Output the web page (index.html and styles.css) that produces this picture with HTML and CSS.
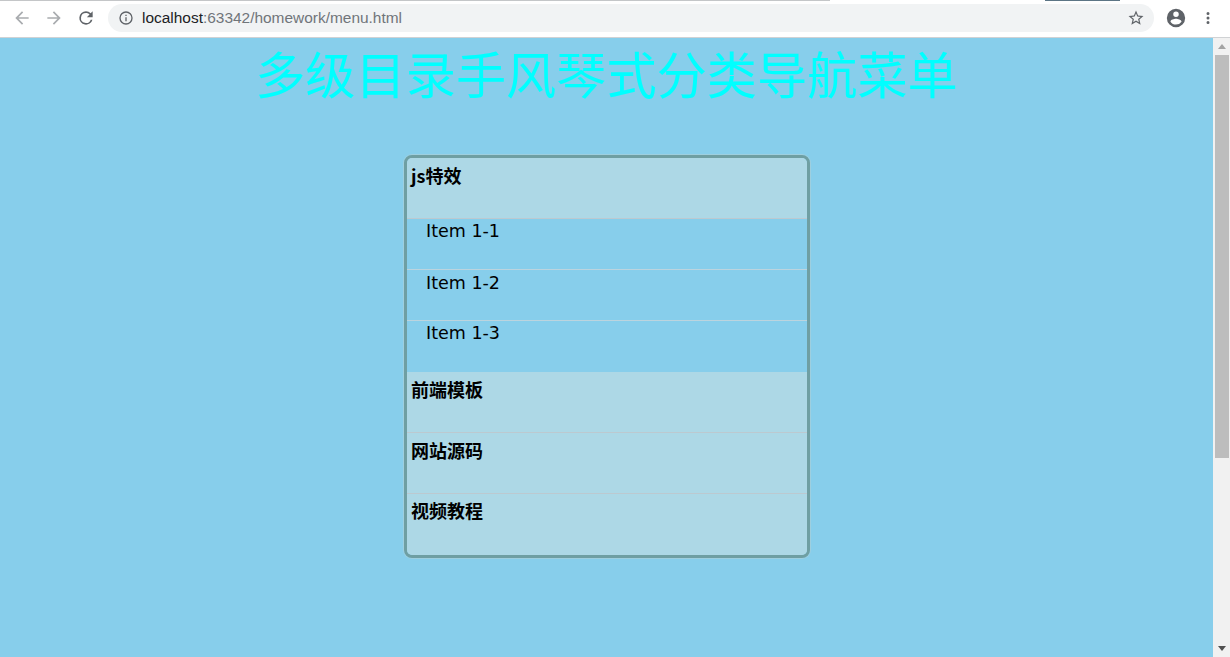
FILE: index.html
```html
<!DOCTYPE html>
<html lang="zh">
<head>
<meta charset="utf-8">
<title>menu</title>
<link rel="stylesheet" href="styles.css">
</head>
<body>
<div class="tabstrip"><span class="strip-a"></span><span class="strip-b"></span><span class="strip-c"></span></div>
<header class="toolbar">
  <svg class="nav-icon" viewBox="0 0 24 24"><path class="back" d="M20 11H7.8l5.6-5.6L12 4l-8 8 8 8 1.4-1.4L7.8 13H20z"/></svg>
  <svg class="nav-icon" viewBox="0 0 24 24"><path class="back" d="M4 11h12.2l-5.6-5.6L12 4l8 8-8 8-1.4-1.4 5.6-5.6H4z"/></svg>
  <svg class="nav-icon" viewBox="0 0 24 24"><path class="live" d="M17.65 6.35A7.96 7.96 0 0 0 12 4a8 8 0 1 0 7.74 10h-2.08A6 6 0 1 1 12 6c1.66 0 3.14.69 4.22 1.78L13 11h7V4z"/></svg>
  <div class="omnibox">
    <svg class="info" viewBox="0 0 24 24"><path class="live" d="M11 7h2v2h-2zm0 4h2v6h-2zm1-9a10 10 0 1 0 0 20 10 10 0 0 0 0-20zm0 18a8 8 0 1 1 0-16 8 8 0 0 1 0 16z"/></svg>
    <span class="url"><span class="host">localhost</span>:63342/homework/menu.html</span>
    <svg class="star" viewBox="0 0 24 24"><path class="live" d="M22 9.24l-7.19-.62L12 2 9.19 8.63 2 9.24l5.46 4.73L5.82 21 12 17.27 18.18 21l-1.63-7.03L22 9.24zM12 15.4l-3.76 2.27 1-4.28-3.32-2.88 4.38-.38L12 6.1l1.71 4.04 4.38.38-3.32 2.88 1 4.28L12 15.4z"/></svg>
  </div>
  <svg class="avatar" viewBox="0 0 24 24"><path class="live" d="M12 2a10 10 0 1 0 0 20 10 10 0 0 0 0-20zm0 3a3 3 0 1 1 0 6 3 3 0 0 1 0-6zm0 14.2a7.2 7.2 0 0 1-6-3.22c.03-2 4-3.08 6-3.08s5.97 1.09 6 3.08a7.2 7.2 0 0 1-6 3.22z"/></svg>
  <svg class="dots" viewBox="0 0 24 24"><path class="live" d="M12 8a2 2 0 1 0 0-4 2 2 0 0 0 0 4zm0 2a2 2 0 1 0 0 4 2 2 0 0 0 0-4zm0 6a2 2 0 1 0 0 4 2 2 0 0 0 0-4z"/></svg>
</header>
<div class="viewport">
  <main class="page">
    <h1 class="title">多级目录手风琴式分类导航菜单</h1>
    <nav class="menu">
      <div class="head head-first">js特效</div>
      <div class="item">Item 1-1</div>
      <div class="item item-mid">Item 1-2</div>
      <div class="item item-last">Item 1-3</div>
      <div class="head">前端模板</div>
      <div class="head">网站源码</div>
      <div class="head head-last">视频教程</div>
    </nav>
  </main>
  <aside class="scrollbar">
    <span class="arrow-up"></span>
    <span class="thumb"></span>
    <span class="arrow-down"></span>
  </aside>
</div>
</body>
</html>
```
FILE: styles.css
```css
* { box-sizing: border-box; }
html, body { margin: 0; height: 657px; overflow: hidden; }
body {
  background: #87ceeb;
  font-family: "Noto Sans", "Noto Sans CJK SC", sans-serif;
  display: flex;
  flex-direction: column;
}
.tabstrip { height: 1px; display: flex; background: #fff; flex: none; }
.strip-a { width: 830px; background: #c4c6c8; }
.strip-b { width: 215px; background: #fff; }
.strip-c { width: 75px; background: #5c7585; }
.toolbar {
  height: 37px;
  flex: none;
  background: #fff;
  border-bottom: 1px solid #d0d2d4;
  display: flex;
  align-items: center;
  padding: 0 12px 2px 12px;
}
.nav-icon { width: 20px; height: 20px; margin-right: 12px; flex: none; }
.back { fill: #a9acaf; }
.live { fill: #5f6368; }
.omnibox {
  width: 1046px;
  height: 28px;
  background: #f1f3f4;
  border-radius: 14px;
  display: flex;
  align-items: center;
  padding: 0 9px 0 10px;
  flex: none;
}
.info { width: 16px; height: 16px; margin-right: 8px; flex: none; }
.url {
  font-family: "Liberation Sans", sans-serif;
  font-size: 15.45px;
  color: #70757a;
  flex: 1;
}
.host { color: #202124; }
.star { width: 18px; height: 18px; flex: none; }
.avatar { width: 22px; height: 22px; margin-left: 11px; flex: none; }
.dots { width: 18px; height: 18px; margin-left: 12px; flex: none; }
.viewport { flex: 1; display: flex; min-height: 0; }
.page { flex: 1; min-width: 0; }
.title {
  margin: 1px 0 0;
  height: 116px;
  text-align: center;
  font-family: "Noto Sans CJK SC", sans-serif;
  font-size: 50.2px;
  line-height: 66px;
  font-weight: 400;
  color: #00ffff;
}
.menu {
  width: 406px;
  height: 403px;
  margin-left: 404px;
  border: 3px solid #6f9fa3;
  border-radius: 8px;
  box-shadow: 0 0 0 1px #9ecfdf;
  overflow: hidden;
  display: flex;
  flex-direction: column;
}
.head {
  height: 61px;
  flex: none;
  background: #add8e6;
  border-bottom: 1px solid #bcc9d0;
  padding: 5px 0 0 4px;
  font-family: "Noto Sans CJK SC", sans-serif;
  font-size: 18px;
  font-weight: 700;
  line-height: 24px;
  color: #000;
}
.head-last { border-bottom: 0; padding-top: 4px; }
.item {
  height: 51px;
  flex: none;
  border-bottom: 1px solid #bcd4de;
  padding: 0 0 0 19px;
  font-family: "DejaVu Sans", sans-serif;
  font-size: 17.5px;
  line-height: 24px;
  color: #000;
}
.item-mid { padding-top: 1px; }
.item-last { border-bottom: 0; }
.scrollbar {
  width: 17px;
  flex: none;
  background: #f1f1f1;
  display: flex;
  flex-direction: column;
  align-items: center;
  padding: 6px 0;
}
.thumb { width: 14px; height: 403px; background: #bdbdbd; margin-top: 6px; }
.arrow-up {
  width: 0; height: 0;
  border-left: 4px solid transparent;
  border-right: 4px solid transparent;
  border-bottom: 5px solid #a3a3a3;
}
.arrow-down {
  width: 0; height: 0;
  margin-top: auto;
  border-left: 4px solid transparent;
  border-right: 4px solid transparent;
  border-top: 5px solid #505050;
}
```
